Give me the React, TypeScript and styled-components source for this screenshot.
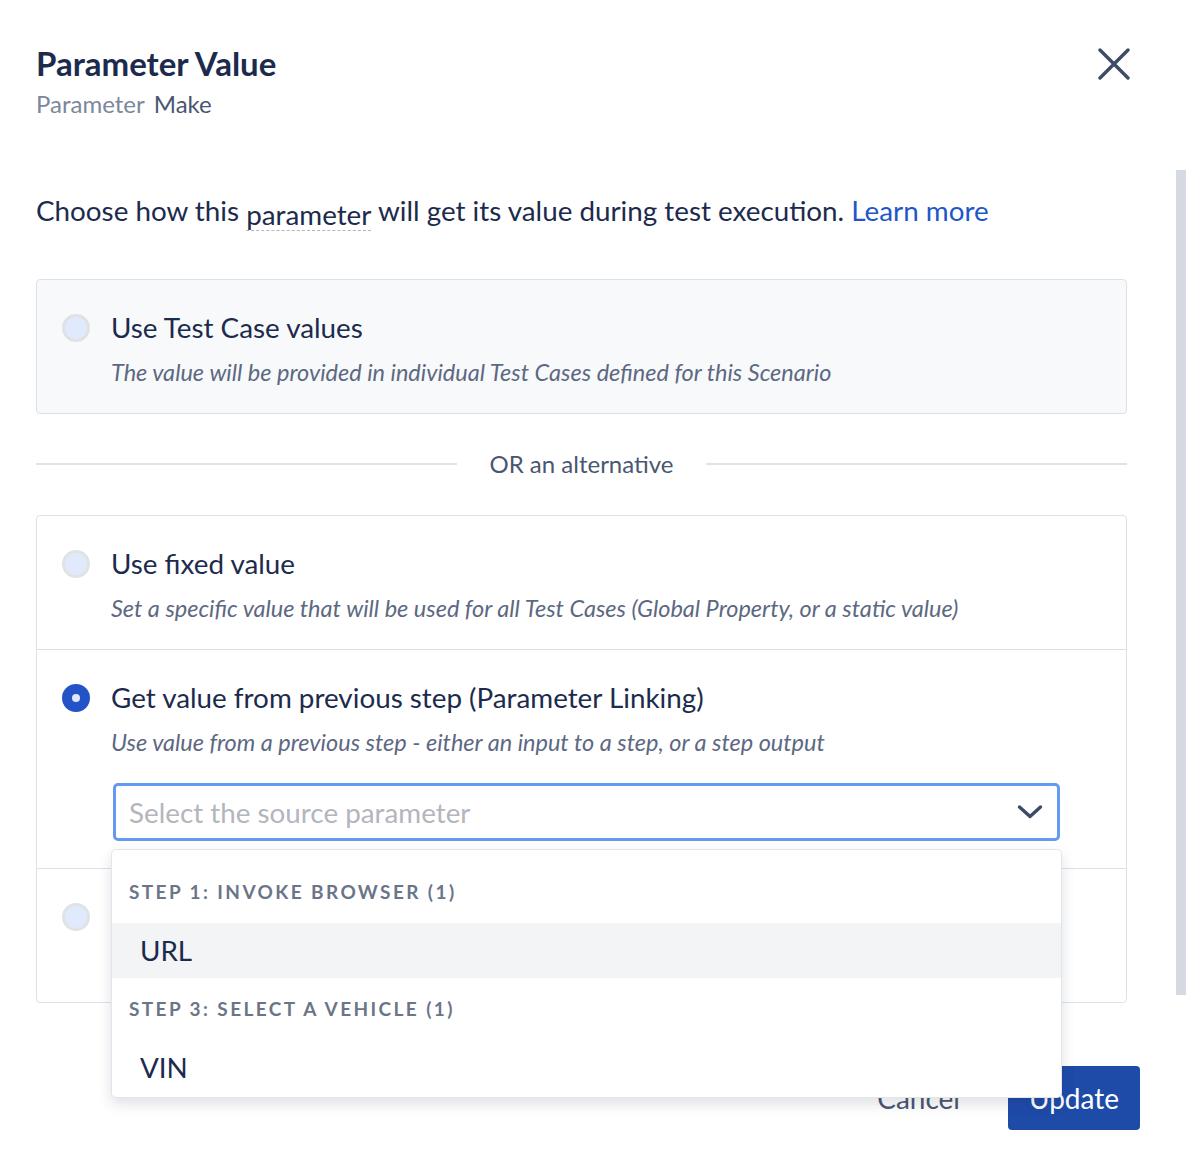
import React from 'react';
import styled, { createGlobalStyle } from 'styled-components';

const GlobalStyle = createGlobalStyle`
    body {
        margin: 0;
        background: #ffffff;
        font-family: Lato, 'Open Sans', sans-serif;
        color: #1c2b4d;
    }
`;

const Page = styled.div`
    position: relative;
    width: 1186px;
    height: 1164px;
    overflow: hidden;
    background: #fff;
`;

const Content = styled.div`
    padding: 44px 59px 0 36px;
`;

const Header = styled.div`
    display: flex;
    justify-content: space-between;
    align-items: flex-start;
`;

const Title = styled.h1`
    margin: 0;
    font-size: 33px;
    line-height: 38px;
    font-weight: 700;
    color: #1c2b4d;
`;

const Subtitle = styled.div`
    margin-top: 6px;
    font-size: 24px;
    line-height: 32px;
    color: #7c879b;

    span {
        color: #4b5670;
        margin-left: 9px;
    }
`;

const CloseButton = styled.button`
    border: none;
    background: none;
    padding: 0;
    margin: 4px -3px 0 0;
    width: 32px;
    height: 32px;
    cursor: pointer;
`;

const Intro = styled.p`
    margin: 74px 0 0;
    font-size: 27.8px;
    line-height: 34px;
    color: #1c2b4d;
`;

const Term = styled.span`
    display: inline-block;
    line-height: 30px;
    border-bottom: 1px dashed #b0b4bb;
    vertical-align: -4px;
`;

const Link = styled.a`
    color: #1f56c9;
    text-decoration: none;
`;

const Card = styled.div`
    margin-top: 48px;
    border: 1px solid #dde0e6;
    border-radius: 4px;
    background: #f8f9fb;
`;

const Group = styled.div`
    border: 1px solid #dde0e6;
    border-radius: 4px;
    background: #fff;
`;

const Option = styled.div<{ $last?: boolean }>`
    display: grid;
    grid-template-columns: 28px 1fr;
    column-gap: 21px;
    padding: 32px 24px 27px 25px;
    border-bottom: ${({ $last }) => ($last ? 'none' : '1px solid #dde0e6')};
`;

const Radio = styled.span<{ $checked?: boolean }>`
    width: 28px;
    height: 28px;
    margin-top: 2px;
    box-sizing: border-box;
    border-radius: 50%;
    display: flex;
    align-items: center;
    justify-content: center;
    background: ${({ $checked }) => ($checked ? '#2453c7' : '#e0eafc')};
    border: 3px solid ${({ $checked }) => ($checked ? '#2453c7' : '#e0e2e6')};

    &::after {
        content: '';
        display: ${({ $checked }) => ($checked ? 'block' : 'none')};
        width: 8px;
        height: 8px;
        border-radius: 50%;
        background: #dfe8fb;
    }
`;

const OptionBody = styled.div`
    min-width: 0;
`;

const OptionTitle = styled.div`
    font-size: 27.8px;
    line-height: 32px;
    color: #1c2b4d;
`;

const OptionDesc = styled.div`
    margin-top: 14px;
    font-size: 23.5px;
    line-height: 28px;
    font-style: italic;
    color: #5d6882;
`;

const Divider = styled.div`
    display: flex;
    align-items: center;
    gap: 32px;
    margin: 38px 0 39px;
    font-size: 24px;
    line-height: 24px;
    color: #4b5670;

    &::before,
    &::after {
        content: '';
        flex: 1;
        height: 2px;
        background: #e1e3e8;
    }
`;

const SelectWrap = styled.div`
    position: relative;
    margin: 27px 42px 0 2px;
`;

const SelectBox = styled.div`
    height: 58px;
    box-sizing: border-box;
    border: 3px solid #6699f0;
    border-radius: 5px;
    display: flex;
    align-items: center;
    justify-content: space-between;
    padding: 0 14px 0 13px;
    font-size: 27.8px;
    color: #b3b6bc;
    background: #fff;
`;

const Menu = styled.div`
    position: absolute;
    z-index: 2;
    top: calc(100% + 8px);
    left: -2px;
    right: -2px;
    padding: 11px 0 2px;
    background: #fff;
    border: 1px solid #e3e5e9;
    border-radius: 5px;
    box-shadow: 0 6px 14px rgba(30, 40, 70, 0.14);
`;

const MenuHeader = styled.div`
    padding: 19px 17px;
    font-size: 19px;
    line-height: 24px;
    font-weight: 700;
    letter-spacing: 2.4px;
    text-transform: uppercase;
    color: #6b7588;
`;

const MenuItem = styled.div<{ $active?: boolean }>`
    height: 55px;
    display: flex;
    align-items: center;
    padding: 0 28px;
    font-size: 27.8px;
    color: #1c2b4d;
    background: ${({ $active }) => ($active ? '#f3f4f6' : '#fff')};
`;

const Footer = styled.div`
    display: flex;
    justify-content: flex-end;
    align-items: center;
    gap: 27px;
    margin: 63px -13px 0 0;
`;

const Button = styled.button<{ $primary?: boolean }>`
    height: 64px;
    padding: 0 21px;
    border: none;
    border-radius: 4px;
    font-family: Lato, sans-serif;
    font-size: 28px;
    cursor: pointer;
    background: ${({ $primary }) => ($primary ? '#1e4aa8' : 'transparent')};
    color: ${({ $primary }) => ($primary ? '#fff' : '#4b5670')};
`;

const Scrollbar = styled.div`
    position: absolute;
    top: 170px;
    right: 0;
    width: 10px;
    height: 825px;
    background: #d5d9e1;
`;

const Chevron = () => (
    <svg width="26" height="16" viewBox="0 0 26 16" fill="none">
        <path d="M2.5 3 L13 12.5 L23.5 3" stroke="#3d4b66" strokeWidth="3.4" strokeLinecap="round" strokeLinejoin="round" />
    </svg>
);

const CloseIcon = () => (
    <svg width="32" height="32" viewBox="0 0 32 32" fill="none">
        <path d="M2 2 L30 30 M30 2 L2 30" stroke="#3d4b66" strokeWidth="3.4" strokeLinecap="round" />
    </svg>
);

const App: React.FC = () => {
    return (
        <Page>
            <GlobalStyle />
            <Content>
                <Header>
                    <div>
                        <Title>Parameter Value</Title>
                        <Subtitle>
                            Parameter<span>Make</span>
                        </Subtitle>
                    </div>
                    <CloseButton aria-label="Close">
                        <CloseIcon />
                    </CloseButton>
                </Header>

                <Intro>
                    Choose how this <Term>parameter</Term> will get its value during test execution.{' '}
                    <Link href="#">Learn more</Link>
                </Intro>

                <Card>
                    <Option $last>
                        <Radio />
                        <OptionBody>
                            <OptionTitle>Use Test Case values</OptionTitle>
                            <OptionDesc>The value will be provided in individual Test Cases defined for this Scenario</OptionDesc>
                        </OptionBody>
                    </Option>
                </Card>

                <Divider>OR an alternative</Divider>

                <Group>
                    <Option>
                        <Radio />
                        <OptionBody>
                            <OptionTitle>Use fixed value</OptionTitle>
                            <OptionDesc>
                                Set a specific value that will be used for all Test Cases (Global Property, or a static value)
                            </OptionDesc>
                        </OptionBody>
                    </Option>
                    <Option>
                        <Radio $checked />
                        <OptionBody>
                            <OptionTitle>Get value from previous step (Parameter Linking)</OptionTitle>
                            <OptionDesc>Use value from a previous step - either an input to a step, or a step output</OptionDesc>
                            <SelectWrap>
                                <SelectBox>
                                    Select the source parameter
                                    <Chevron />
                                </SelectBox>
                                <Menu>
                                    <MenuHeader>Step 1: Invoke Browser (1)</MenuHeader>
                                    <MenuItem $active>URL</MenuItem>
                                    <MenuHeader>Step 3: Select a Vehicle (1)</MenuHeader>
                                    <MenuItem>VIN</MenuItem>
                                </Menu>
                            </SelectWrap>
                        </OptionBody>
                    </Option>
                    <Option $last>
                        <Radio />
                        <OptionBody>
                            <OptionTitle>Auto-generate value</OptionTitle>
                            <OptionDesc>Generate a new value every time the test is executed</OptionDesc>
                        </OptionBody>
                    </Option>
                </Group>

                <Footer>
                    <Button>Cancel</Button>
                    <Button $primary>Update</Button>
                </Footer>
            </Content>
            <Scrollbar />
        </Page>
    );
};

export default App;
